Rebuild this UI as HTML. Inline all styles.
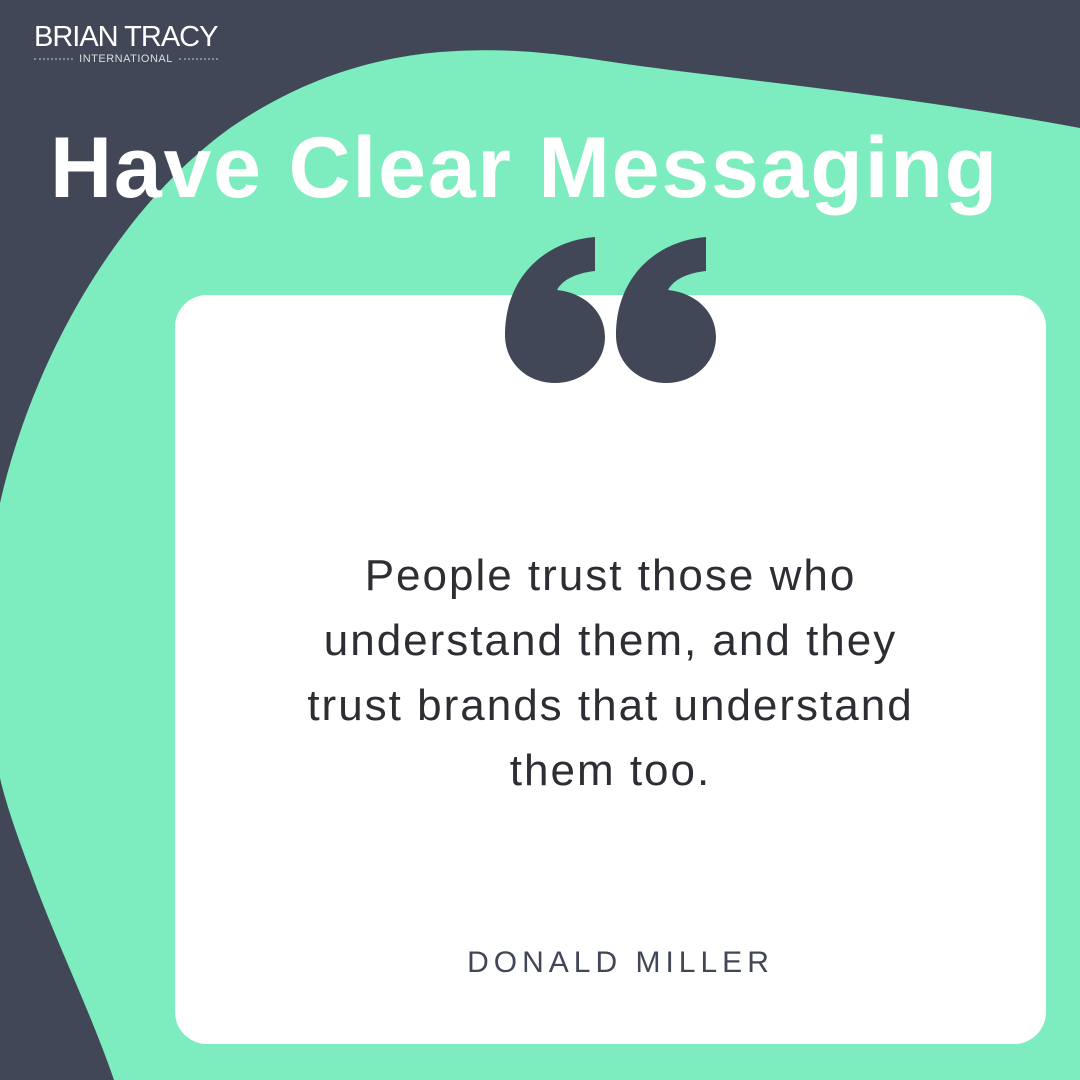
<!DOCTYPE html>
<html><head><meta charset="utf-8"><style>
body{margin:0;width:1080px;height:1080px;overflow:hidden;background:#414756;font-family:"Liberation Sans",sans-serif;position:relative}
svg.bg{position:absolute;left:0;top:0}
.logo{position:absolute;left:34px;top:22px;color:#fff;font-size:29px;letter-spacing:-1px;line-height:30px}
.logo2{position:absolute;left:34px;top:53px;width:184px;display:flex;align-items:center;gap:6px;color:#ddd;font-size:11px;letter-spacing:0.5px}
.logo2 i{flex:1;border-top:2px dotted #888}
h1{position:absolute;left:50px;top:118px;margin:0;font-size:86px;font-weight:bold;color:#fff;letter-spacing:1.8px;white-space:nowrap;line-height:100px}
.card{position:absolute;left:175px;top:295px;width:871px;height:749px;background:#fff;border-radius:32px}
.q{position:absolute;left:175px;width:871px;top:543px;text-align:center;font-size:44px;line-height:65px;color:#2d2d33;letter-spacing:2px}
.a{position:absolute;left:175px;width:871px;top:946px;text-align:center;font-size:30px;letter-spacing:5px;color:#414756;padding-left:20px;box-sizing:border-box}
</style></head><body>
<svg class="bg" width="1080" height="1080" viewBox="0 0 1080 1080">
<path fill="#7dedbf" d="M0,503 C30,370 110,215 230,128 C300,80 370,58 440,52 C520,46 570,56 640,66 C760,82 900,95 1080,128 L1080,1080 L114,1080 C90,1010 55,940 30,870 C15,830 5,800 0,778 Z"/>
</svg>
<div class="logo">BRIAN TRACY</div>
<div class="logo2"><i></i><span>INTERNATIONAL</span><i></i></div>
<h1>Have Clear Messaging</h1>
<div class="card"></div>
<svg style="position:absolute;left:0;top:0" width="1080" height="1080">
<g fill="#414756">
<path transform="translate(505,237)" d="M90,0 L90,34 C72,36 58,42 52,53 C80,56 100,75 100,100 C100,126 78,146 50,146 C22,146 0,126 0,98 C0,40 40,4 90,0 Z"/>
<path transform="translate(616,237)" d="M90,0 L90,34 C72,36 58,42 52,53 C80,56 100,75 100,100 C100,126 78,146 50,146 C22,146 0,126 0,98 C0,40 40,4 90,0 Z"/>
</g></svg>
<div class="q">People trust those who<br>understand them, and they<br>trust brands that understand<br>them too.</div>
<div class="a">DONALD MILLER</div>
</body></html>
